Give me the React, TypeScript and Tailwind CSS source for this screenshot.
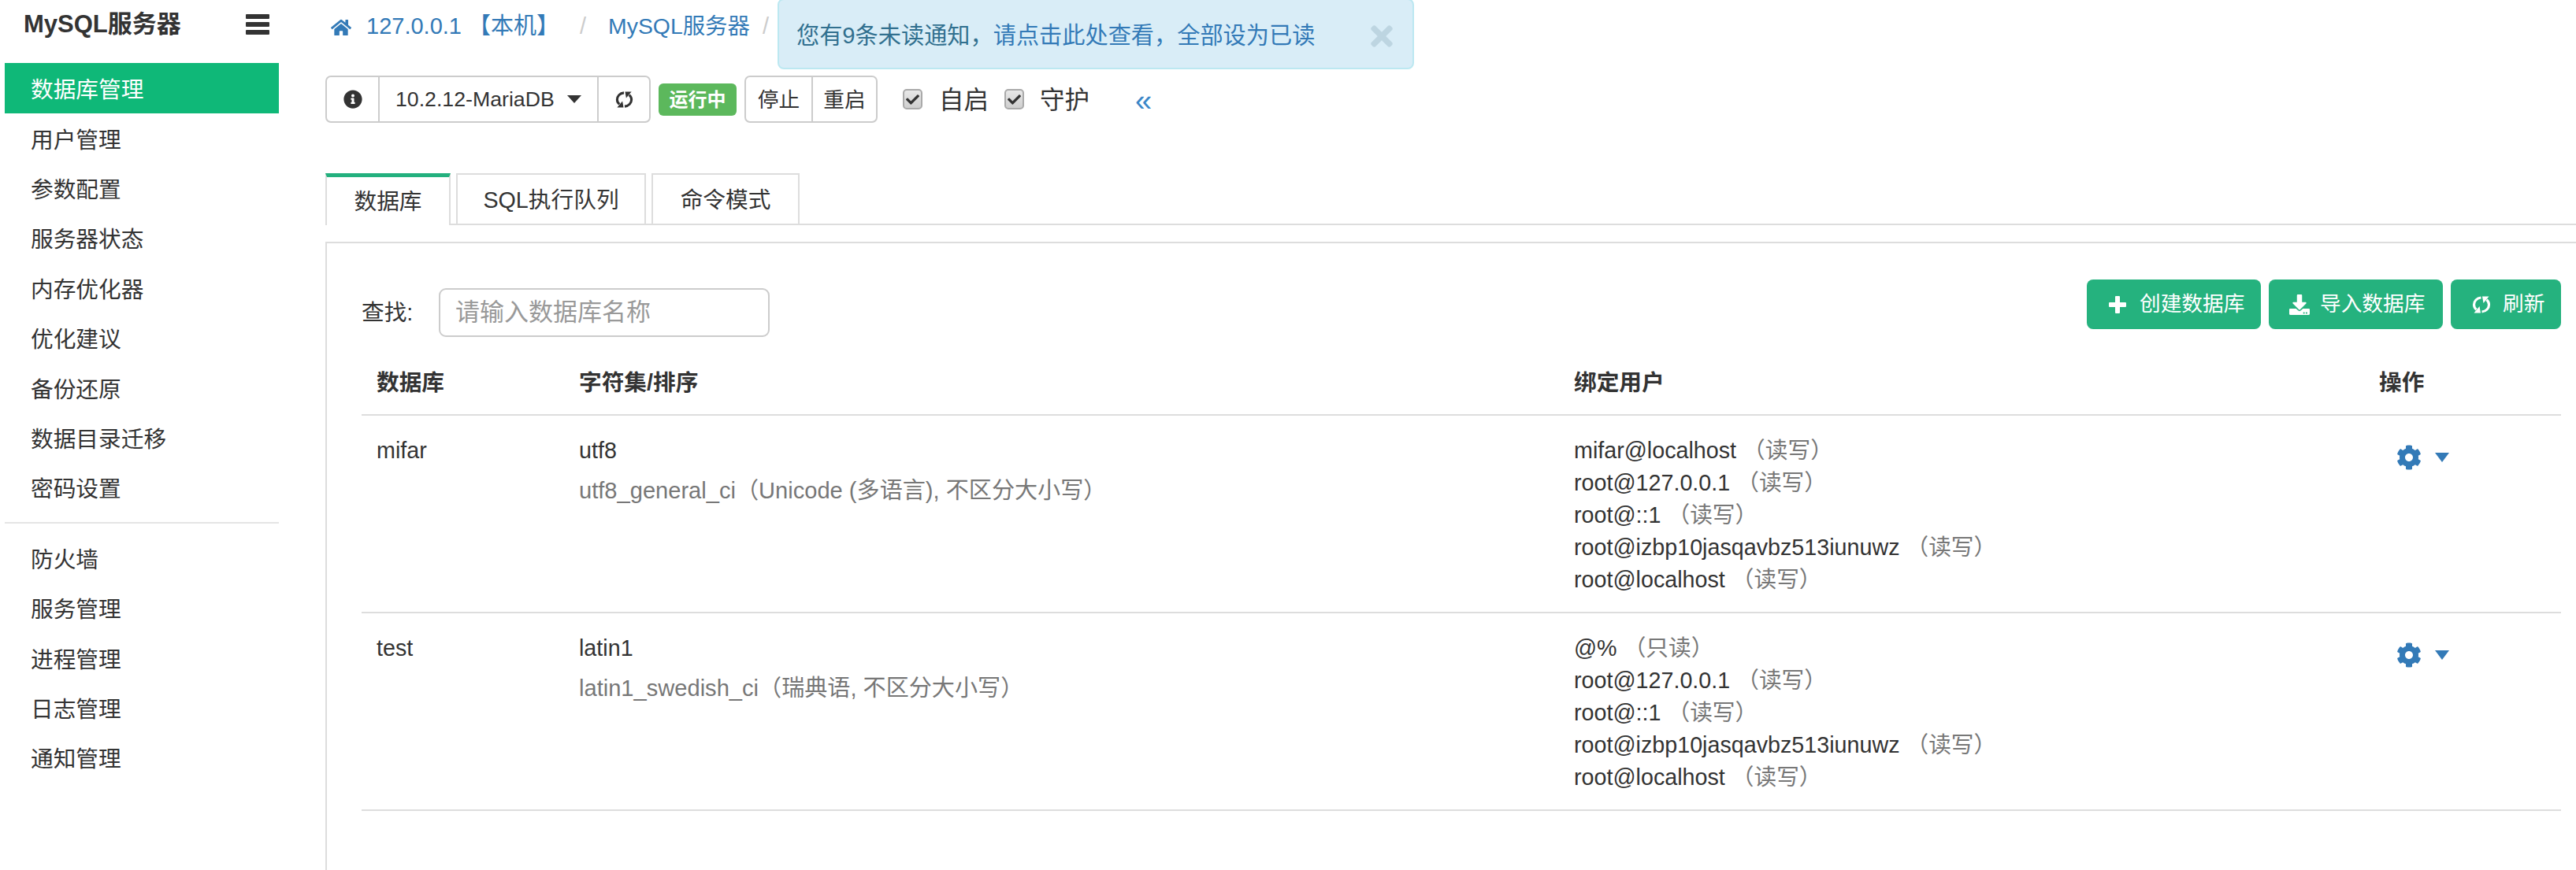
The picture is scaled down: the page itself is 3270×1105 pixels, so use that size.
import { FaCheck, FaCog, FaDownload, FaHome, FaInfoCircle, FaTimes } from "react-icons/fa";

const mainMenu = ["用户管理", "参数配置", "服务器状态", "内存优化器", "优化建议", "备份还原", "数据目录迁移", "密码设置"];
const otherMenu = ["防火墙", "服务管理", "进程管理", "日志管理", "通知管理"];

const databases = [
  {
    name: "mifar",
    charset: "utf8",
    collation: "utf8_general_ci（Unicode (多语言), 不区分大小写）",
    users: [
      ["mifar@localhost", "读写"],
      ["root@127.0.0.1", "读写"],
      ["root@::1", "读写"],
      ["root@izbp10jasqavbz513iunuwz", "读写"],
      ["root@localhost", "读写"],
    ],
  },
  {
    name: "test",
    charset: "latin1",
    collation: "latin1_swedish_ci（瑞典语, 不区分大小写）",
    users: [
      ["@%", "只读"],
      ["root@127.0.0.1", "读写"],
      ["root@::1", "读写"],
      ["root@izbp10jasqavbz513iunuwz", "读写"],
      ["root@localhost", "读写"],
    ],
  },
];

function Check() {
  return (
    <span className="w-[25px] h-[26px] rounded-[5px] border-2 border-[#aaa] bg-gradient-to-b from-[#e8e8e8] to-[#cfcfcf] flex items-center justify-center">
      <FaCheck className="w-[17px] h-[17px] text-[#333]" />
    </span>
  );
}

// glyphicon-refresh: two thick arcs with barbed tips
function RefreshIcon({ className }: { className: string }) {
  return (
    <svg viewBox="0 0 24 24" className={className}>
      <path d="M11.5 3 C6 3.5 2.5 7.5 2.5 12 C2.5 14.5 3.6 16.6 5.5 18.2" fill="none" stroke="currentColor" strokeWidth="3.2" />
      <path d="M2.5 22.5 L11 22.5 L9.5 14 Z" fill="currentColor" />
      <path d="M12.5 21 C18 20.5 21.5 16.5 21.5 12 C21.5 9.5 20.4 7.4 18.5 5.8" fill="none" stroke="currentColor" strokeWidth="3.2" />
      <path d="M21.5 1.5 L13 1.5 L14.5 10 Z" fill="currentColor" />
    </svg>
  );
}

function PlusIcon({ className }: { className: string }) {
  return (
    <svg viewBox="0 0 22 22" className={className} fill="currentColor">
      <path d="M8 1 a1 1 0 0 1 1-1 h4 a1 1 0 0 1 1 1 v7 h7 a1 1 0 0 1 1 1 v4 a1 1 0 0 1-1 1 h-7 v7 a1 1 0 0 1-1 1 h-4 a1 1 0 0 1-1-1 v-7 h-7 a1 1 0 0 1-1-1 v-4 a1 1 0 0 1 1-1 h7 z" />
    </svg>
  );
}

export default function App() {
  return (
    <div className="flex w-[3270px] h-[1105px] overflow-hidden bg-white text-[#333] text-[28.7px] leading-[41px] font-['Liberation_Sans','Noto_Sans_CJK_SC',sans-serif]">
      {/* Sidebar */}
      <aside className="w-[413px] shrink-0 pl-[6px] pr-[59px]">
        <div className="h-[80px] flex items-start justify-between pt-[10px] pl-[24px] pr-[12px]">
          <span className="text-[31px] font-bold">MySQL服务器</span>
          <span className="flex flex-col gap-[4px] w-[30px] mt-[8px]">
            <i className="h-[6px] rounded-[1px] bg-[#333]" />
            <i className="h-[6px] rounded-[1px] bg-[#333]" />
            <i className="h-[6px] rounded-[1px] bg-[#333]" />
          </span>
        </div>
        <div className="h-[64px] flex items-center pl-[33px] pt-[5px] bg-[#0fb878] text-white">数据库管理</div>
        {mainMenu.map((m) => (
          <div key={m} className="h-[63.4px] flex items-center pl-[33px] pt-[5px]">{m}</div>
        ))}
        <div className="h-[2px] bg-[#e5e5e5] mt-[12px] mb-[13px]" />
        {otherMenu.map((m) => (
          <div key={m} className="h-[63.4px] flex items-center pl-[33px] pt-[3px]">{m}</div>
        ))}
      </aside>

      {/* Main */}
      <main className="relative flex-1 flex flex-col min-w-0">
        <div className="absolute left-[574px] top-[-2px] w-[808px] h-[90px] rounded-[8px] border-2 border-[#bce8f1] bg-[#d9edf7] flex items-center pl-[22px] pt-[4px] text-[29.2px] text-[#31708f]">
          <span>您有9条未读通知，<span className="text-[#337ab7]">请点击此处查看，全部设为已读</span></span>
          <FaTimes className="absolute left-[745px] top-[26px] w-[40px] h-[40px] text-[#bdd5e1]" />
        </div>

        {/* Breadcrumb */}
        <div className="h-[96px] flex items-start pt-[13px] pl-[7px] text-[#337ab7] text-[29px]">
          <FaHome className="w-[26px] h-[26px] mt-[9px]" />
          <span className="ml-[19px]">127.0.0.1 【本机】</span>
          <span className="ml-[26px] text-[#ccc]">/</span>
          <span className="ml-[28px] text-[28.4px]">MySQL服务器</span>
          <span className="ml-[16px] text-[#ccc]">/</span>
        </div>

        {/* Toolbar */}
        <div className="h-[60px] flex items-center text-[26.7px]">
          <div className="flex h-[60px] w-[413px] rounded-[7px] border-2 border-[#ccc]">
            <span className="w-[67px] flex items-center justify-center border-r-2 border-[#ccc]">
              <FaInfoCircle className="w-[24px] h-[24px]" />
            </span>
            <span className="w-[278px] flex items-center pl-[20px] border-r-2 border-[#ccc]">
              10.2.12-MariaDB
              <span className="ml-[16px] w-0 h-0 border-x-[9px] border-x-transparent border-t-[10px] border-t-[#333]" />
            </span>
            <span className="flex-1 flex items-center justify-center">
              <RefreshIcon className="w-[23px] h-[23px]" />
            </span>
          </div>
          <span className="ml-[10px] w-[99px] h-[41px] rounded-[6px] bg-[#5cb85c] text-white font-bold text-[24px] flex items-center justify-center">运行中</span>
          <div className="ml-[10px] flex h-[60px] w-[169px] rounded-[7px] border-2 border-[#ccc]">
            <span className="w-[83px] flex items-center justify-center pt-[3px]">停止</span>
            <span className="flex-1 flex items-center justify-center pt-[3px] border-l-2 border-[#ccc]">重启</span>
          </div>
          <span className="ml-[32px]"><Check /></span>
          <span className="ml-[21px] pt-[3px] text-[31.5px]">自启</span>
          <span className="ml-[20px]"><Check /></span>
          <span className="ml-[20px] pt-[3px] text-[31.5px]">守护</span>
          <span className="ml-[58px] pt-[3px] text-[#3a87c8] text-[38px] leading-none">«</span>
        </div>

        {/* Tabs */}
        <div className="mt-[64px] h-[66px] flex items-start gap-[7px] border-b-2 border-[#ddd]">
          <div className="w-[159px] h-[66px] -mb-[2px] pt-[2px] bg-white border-t-[5px] border-t-[#23b07e] border-x-2 border-x-[#ddd] flex items-center justify-center">数据库</div>
          <div className="w-[241px] h-[64px] pt-[3px] border-2 border-b-0 border-[#ddd] flex items-center justify-center">SQL执行队列</div>
          <div className="w-[188px] h-[64px] pt-[3px] border-2 border-b-0 border-[#ddd] flex items-center justify-center">命令模式</div>
        </div>

        {/* Panel */}
        <section className="mt-[21px] flex-1 border-t-2 border-l-2 border-[#ddd] pl-[44px] pr-[19px]">
          <div className="h-[134px] flex items-start justify-between">
            <div className="flex items-center mt-[57px] h-[62px]">
              <span className="w-[98px]">查找:</span>
              <input
                readOnly
                placeholder="请输入数据库名称"
                className="w-[420px] h-[62px] rounded-[9px] border-2 border-[#ccc] pl-[19px] text-[31px] outline-none placeholder:text-[#999]"
              />
            </div>
            <div className="flex gap-[10px] mt-[46px] text-white text-[26.7px]">
              <button className="w-[221px] h-[63px] rounded-[8px] bg-[#25b27e] flex items-center pl-[28px]">
                <PlusIcon className="w-[22px] h-[22px]" />
                <span className="ml-[17px]">创建数据库</span>
              </button>
              <button className="w-[221px] h-[63px] rounded-[8px] bg-[#25b27e] flex items-center pl-[26px]">
                <FaDownload className="w-[26px] h-[26px]" />
                <span className="ml-[13px]">导入数据库</span>
              </button>
              <button className="w-[140px] h-[63px] rounded-[8px] bg-[#25b27e] flex items-center pl-[27px]">
                <RefreshIcon className="w-[24px] h-[24px]" />
                <span className="ml-[15px]">刷新</span>
              </button>
            </div>
          </div>

          <table className="w-full table-fixed border-collapse">
            <thead>
              <tr className="h-[84px] border-b-2 border-[#ddd] font-bold text-left">
                <th className="w-[257px] pl-[19px] pt-[3px] font-bold">数据库</th>
                <th className="w-[1263px] pl-[19px] pt-[3px] font-bold">字符集/排序</th>
                <th className="w-[1022px] pl-[19px] pt-[3px] font-bold">绑定用户</th>
                <th className="pl-[19px] pt-[3px] font-bold">操作</th>
              </tr>
            </thead>
            <tbody>
              {databases.map((db) => (
                <tr key={db.name} className="border-b-2 border-[#ddd] align-top">
                  <td className="pl-[19px] pt-[24px] pb-[20px]">{db.name}</td>
                  <td className="pl-[19px] pt-[24px] pb-[20px]">
                    <div>{db.charset}</div>
                    <div className="mt-[10px] text-[29.1px] text-[#777]">{db.collation}</div>
                  </td>
                  <td className="pl-[19px] pt-[24px] pb-[20px]">
                    {db.users.map(([user, access]) => (
                      <div key={user}>
                        {user} <span className="text-[#777]">（{access}）</span>
                      </div>
                    ))}
                  </td>
                  <td className="pl-[41px] pt-[37px]">
                    <div className="flex items-start text-[#337ab7]">
                      <FaCog className="w-[32px] h-[32px]" />
                      <span className="ml-[17px] mt-[10px] w-0 h-0 border-x-[9px] border-x-transparent border-t-[12px] border-t-[#337ab7]" />
                    </div>
                  </td>
                </tr>
              ))}
            </tbody>
          </table>
        </section>
      </main>
    </div>
  );
}
